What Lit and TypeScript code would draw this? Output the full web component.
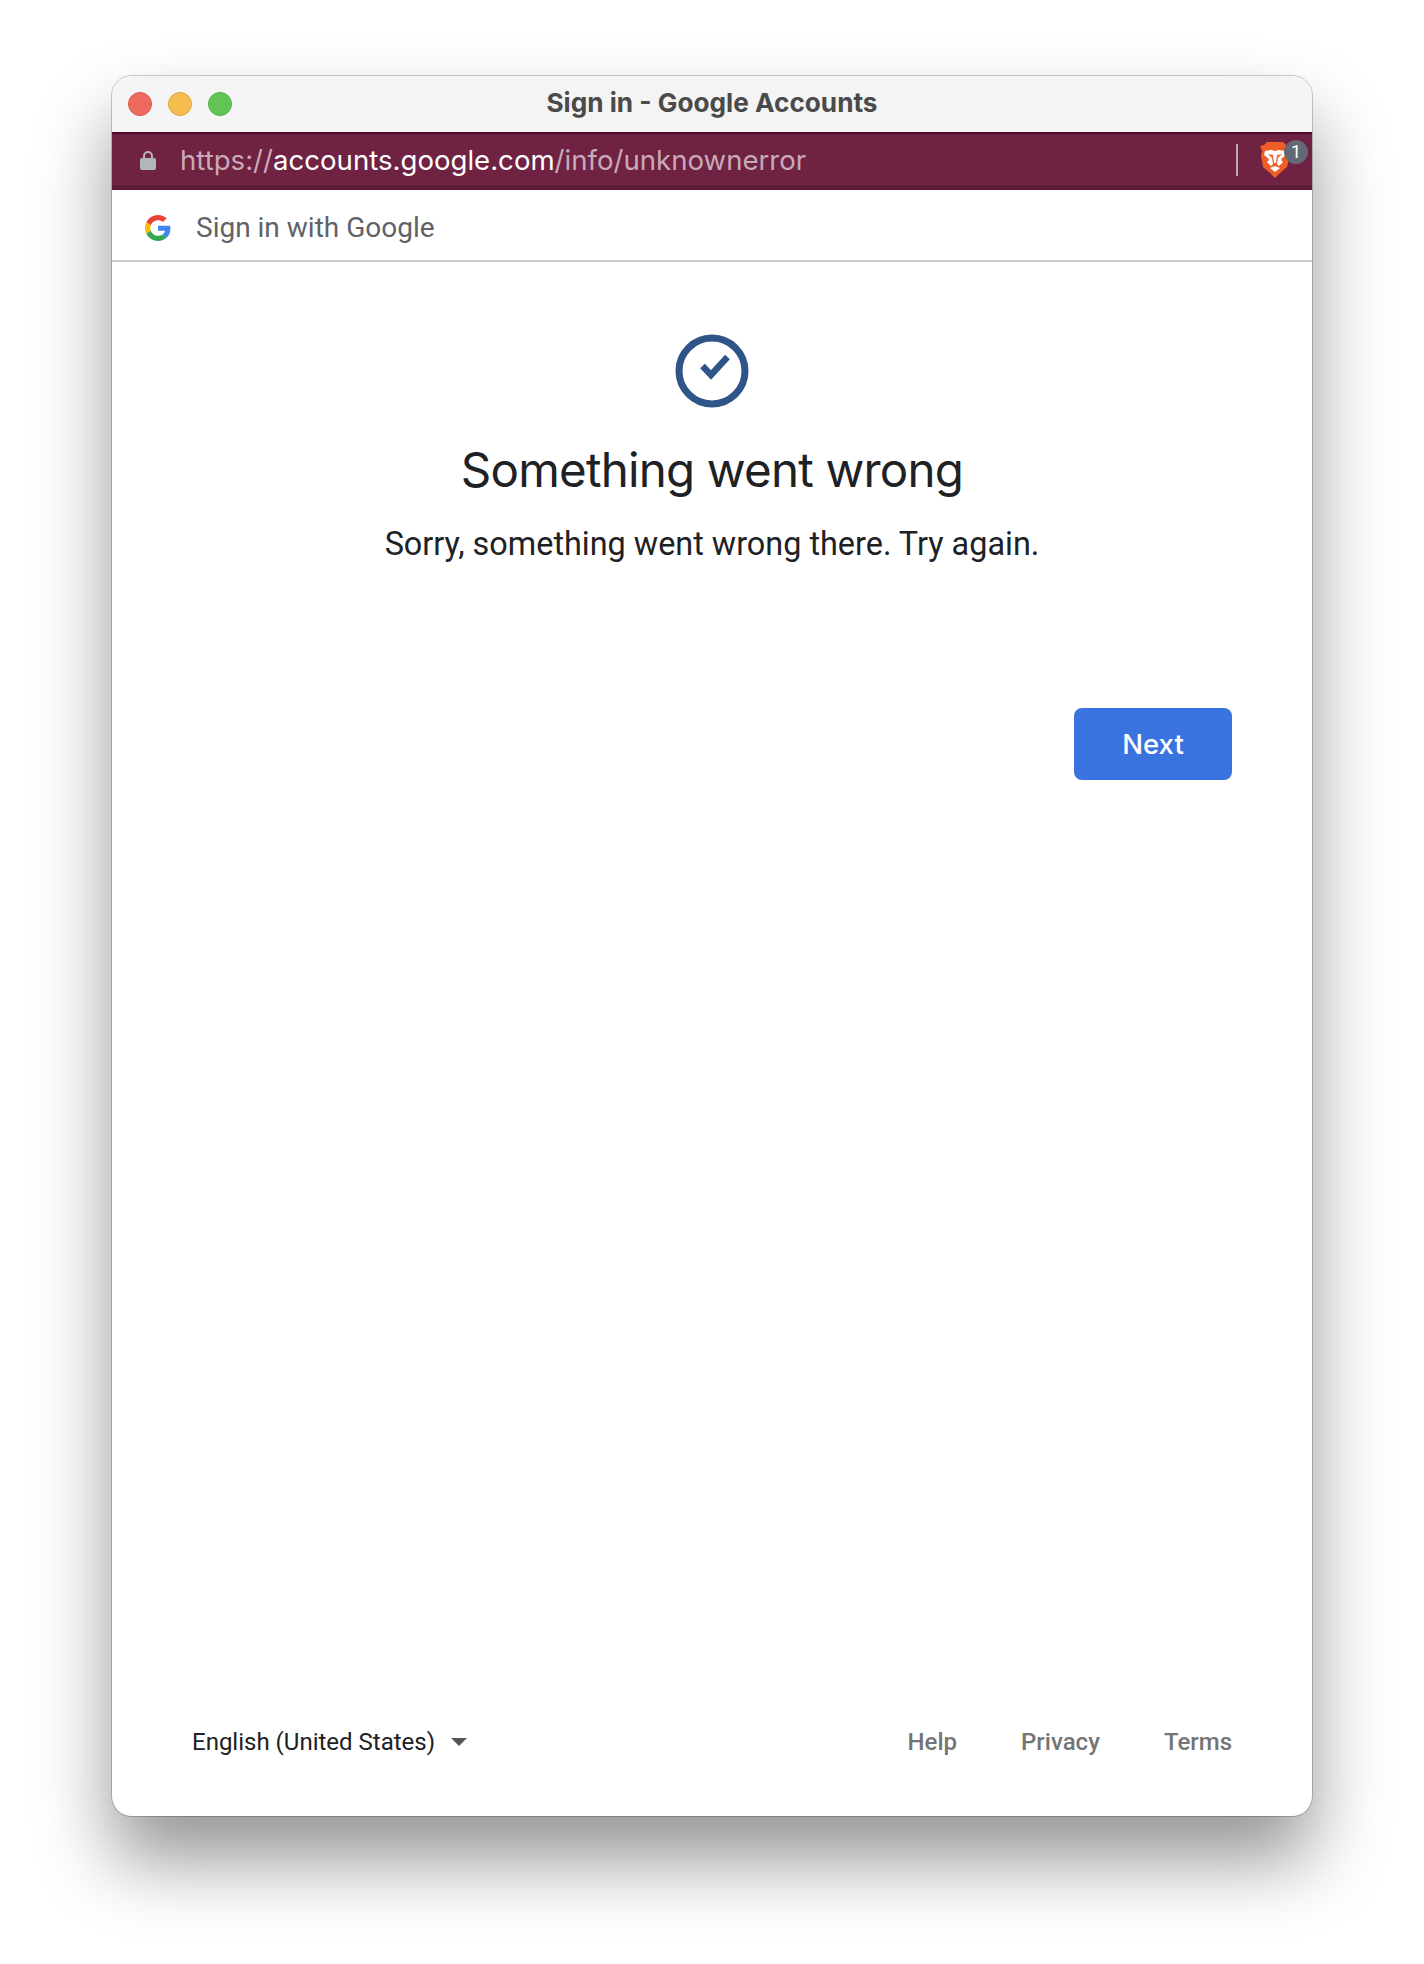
// app.ts
import { LitElement, html, css } from 'lit';
import { customElement } from 'lit/decorators.js';

@customElement('app-root')
export class AppRoot extends LitElement {
  static override styles = css`
    :host {
      display: block;
      width: 1424px;
      height: 1964px;
      background: #fff;
      font-family: Roboto, "Liberation Sans", sans-serif;
      overflow: hidden;
    }
    .page {
      box-sizing: border-box;
      height: 1964px;
      padding: 76px 112px 148px;
    }
    .window {
      box-sizing: border-box;
      height: 1740px;
      display: flex;
      flex-direction: column;
      background: #fff;
      border-radius: 20px;
      overflow: hidden;
      box-shadow: 0 0 0 1px rgba(0, 0, 0, 0.2), 0 44px 75px rgba(0, 0, 0, 0.42);
    }
    .titlebar {
      height: 56px;
      flex: none;
      display: flex;
      align-items: center;
      padding-left: 16px;
      background: #f4f4f4;
      position: relative;
    }
    .lights {
      display: flex;
      gap: 16px;
    }
    .light {
      box-sizing: border-box;
      width: 24px;
      height: 24px;
      border-radius: 50%;
      border: 1px solid;
    }
    .red { background: #ee6a5f; border-color: #d8574c; }
    .yellow { background: #f5bd4f; border-color: #dba33d; }
    .green { background: #61c454; border-color: #52ad46; }
    .title {
      position: absolute;
      left: 0;
      right: 0;
      top: 11px;
      text-align: center;
      font-family: Inter, sans-serif;
      font-size: 26.2px;
      line-height: 32px;
      font-weight: 700;
      color: #4a4a4a;
    }
    .urlbar {
      box-sizing: border-box;
      height: 58px;
      flex: none;
      display: flex;
      align-items: center;
      padding-left: 28px;
      background: #6f2242;
      border-top: 2px solid #4c0b28;
      border-bottom: 5px solid #5f1a38;
    }
    .lock {
      width: 16px;
      height: 20px;
      flex: none;
      margin-right: 25px;
    }
    .url {
      flex: 1;
      margin-left: -1px;
      font-family: Inter, sans-serif;
      font-size: 27.6px;
      color: #c9aab8;
      white-space: nowrap;
    }
    .host {
      color: #fff;
    }
    .sep {
      width: 2px;
      height: 32px;
      background: #b8adb2;
      flex: none;
      margin-right: 22px;
    }
    .brave {
      position: relative;
      width: 30px;
      height: 36px;
      flex: none;
      margin-right: 22px;
    }
    .brave svg {
      display: block;
      width: 30px;
      height: 36px;
    }
    .badge {
      position: absolute;
      left: 24px;
      top: -2px;
      width: 24px;
      height: 24px;
      border-radius: 50%;
      background: #646874;
      color: #fff;
      font-size: 18px;
      line-height: 24px;
      text-align: center;
    }
    .subhead {
      box-sizing: border-box;
      height: 72px;
      flex: none;
      display: flex;
      align-items: center;
      padding: 5px 0 0 33px;
      gap: 25px;
      border-bottom: 2px solid #cdcdcd;
      font-size: 28px;
      color: #5f6368;
    }
    .subhead svg {
      width: 26px;
      height: 26px;
      flex: none;
    }
    .main {
      flex: 1;
      display: flex;
      flex-direction: column;
      align-items: center;
      padding-top: 71px;
    }
    .check {
      width: 76px;
      height: 76px;
      display: block;
    }
    h1 {
      margin: 31px 0 0;
      font-family: Inter, sans-serif;
      font-size: 47.5px;
      letter-spacing: -0.8px;
      line-height: 60px;
      font-weight: 400;
      color: #202124;
    }
    p {
      margin: 23px 0 0;
      font-size: 32.4px;
      line-height: 42px;
      color: #202124;
    }
    .actions {
      align-self: stretch;
      display: flex;
      justify-content: flex-end;
      margin-top: 143px;
      padding-right: 80px;
    }
    button {
      width: 158px;
      height: 72px;
      border: none;
      border-radius: 8px;
      background: #3a73e0;
      color: #fff;
      font-family: Inter, sans-serif;
      font-size: 27.5px;
      font-weight: 500;
    }
    .footer {
      flex: none;
      display: flex;
      justify-content: space-between;
      align-items: center;
      box-sizing: border-box;
      height: 150px;
      padding: 1px 80px 0;
      font-size: 24px;
    }
    .lang {
      display: flex;
      align-items: center;
      gap: 16px;
      color: #202124;
    }
    .caret {
      width: 0;
      height: 0;
      border-left: 8px solid transparent;
      border-right: 8px solid transparent;
      border-top: 8px solid #555;
    }
    .links {
      display: flex;
      gap: 64px;
      font-weight: 500;
      color: #757575;
    }
  `;

  override render() {
    return html`
      <div class="page">
        <div class="window">
          <div class="titlebar">
            <div class="lights">
              <div class="light red"></div>
              <div class="light yellow"></div>
              <div class="light green"></div>
            </div>
            <div class="title">Sign in - Google Accounts</div>
          </div>
          <div class="urlbar">
            <svg class="lock" viewBox="0 0 16 20">
              <path fill="none" stroke="#b3b5ba" stroke-width="2" d="M4 9V6a4 4 0 0 1 8 0v3" />
              <rect x="0" y="8" width="16" height="12" rx="2" fill="#b3b5ba" />
            </svg>
            <div class="url">https://<span class="host">accounts.google.com</span>/info/unknownerror</div>
            <div class="sep"></div>
            <div class="brave">
              <svg viewBox="0 0 30 36">
                <path fill="#f05e28" d="M7 0h16l3 3 4 1-1 5 1 4-3 12-7 6-5 5-5-5-7-6L1 13l1-4-2-5 4-1z" />
                <path fill="#fff" d="M5 9l6-1 4 1 4-1 6 1 1 4-4 3-1 2 2 2-4 4-2-2h-4l-2 2-4-4 2-2-1-2-4-3z" />
                <path fill="#f05e28" d="M8 12l5 1 1 8h2l1-8 5-1-4 4-1 6h-4l-1-6z" />
                <path fill="#fff" d="M10 26l5-2 5 2-5 4z" />
              </svg>
              <div class="badge">1</div>
            </div>
          </div>
          <div class="subhead">
            <svg viewBox="0 0 48 48">
              <path fill="#EA4335" d="M24 9.5c3.5 0 6.7 1.2 9.2 3.6l6.9-6.9C35.9 2.4 30.5 0 24 0 14.6 0 6.5 5.4 2.6 13.2l8 6.2C12.4 13.7 17.7 9.5 24 9.5z" />
              <path fill="#4285F4" d="M46.98 24.55c0-1.57-.15-3.09-.38-4.55H24v9.02h12.94c-.58 2.96-2.26 5.48-4.78 7.18l7.73 6c4.51-4.18 7.09-10.36 7.09-17.65z" />
              <path fill="#FBBC05" d="M10.53 28.59c-.48-1.45-.76-2.99-.76-4.59s.27-3.14.76-4.59l-7.98-6.19C.92 16.46 0 20.12 0 24c0 3.88.92 7.54 2.56 10.78l7.97-6.19z" />
              <path fill="#34A853" d="M24 48c6.48 0 11.93-2.13 15.89-5.81l-7.73-6c-2.15 1.45-4.92 2.3-8.16 2.3-6.26 0-11.57-4.22-13.47-9.91l-7.98 6.19C6.51 42.62 14.62 48 24 48z" />
            </svg>
            <span>Sign in with Google</span>
          </div>
          <div class="main">
            <svg class="check" viewBox="0 0 76 76">
              <circle cx="38" cy="38" r="33" fill="none" stroke="#2f5488" stroke-width="7" />
              <path fill="none" stroke="#2f5488" stroke-width="6.5" d="M28.5 33l8.5 9 16.5-18" />
            </svg>
            <h1>Something went wrong</h1>
            <p>Sorry, something went wrong there. Try again.</p>
            <div class="actions"><button>Next</button></div>
          </div>
          <div class="footer">
            <div class="lang"><span>English (United States)</span><span class="caret"></span></div>
            <div class="links"><span>Help</span><span>Privacy</span><span>Terms</span></div>
          </div>
        </div>
      </div>
    `;
  }
}
